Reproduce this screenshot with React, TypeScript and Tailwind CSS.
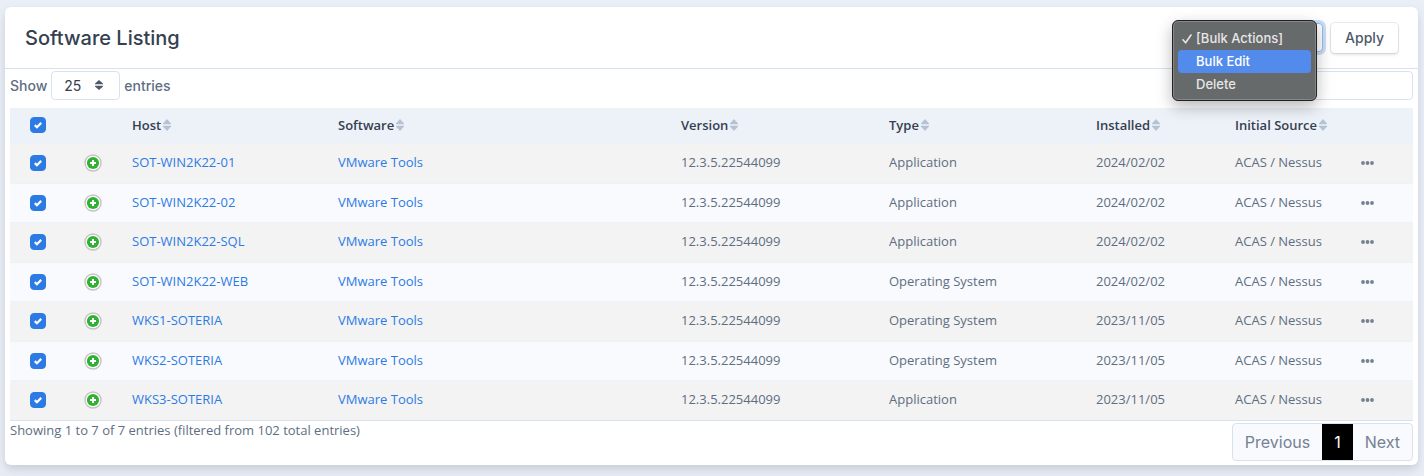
import { useState } from 'react';

type Software = {
  host: string;
  software: string;
  version: string;
  type: string;
  installed: string;
  source: string;
};

const columns = ['Host', 'Software', 'Version', 'Type', 'Installed', 'Initial Source'];

const rows: Software[] = [
  { host: 'SOT-WIN2K22-01', software: 'VMware Tools', version: '12.3.5.22544099', type: 'Application', installed: '2024/02/02', source: 'ACAS / Nessus' },
  { host: 'SOT-WIN2K22-02', software: 'VMware Tools', version: '12.3.5.22544099', type: 'Application', installed: '2024/02/02', source: 'ACAS / Nessus' },
  { host: 'SOT-WIN2K22-SQL', software: 'VMware Tools', version: '12.3.5.22544099', type: 'Application', installed: '2024/02/02', source: 'ACAS / Nessus' },
  { host: 'SOT-WIN2K22-WEB', software: 'VMware Tools', version: '12.3.5.22544099', type: 'Operating System', installed: '2024/02/02', source: 'ACAS / Nessus' },
  { host: 'WKS1-SOTERIA', software: 'VMware Tools', version: '12.3.5.22544099', type: 'Operating System', installed: '2023/11/05', source: 'ACAS / Nessus' },
  { host: 'WKS2-SOTERIA', software: 'VMware Tools', version: '12.3.5.22544099', type: 'Operating System', installed: '2023/11/05', source: 'ACAS / Nessus' },
  { host: 'WKS3-SOTERIA', software: 'VMware Tools', version: '12.3.5.22544099', type: 'Application', installed: '2023/11/05', source: 'ACAS / Nessus' },
];

function Checkbox({ label, checked, onChange }: { label: string; checked: boolean; onChange: () => void }) {
  return (
    <label className="relative mx-auto block h-4 w-4 cursor-pointer">
      <input
        type="checkbox"
        aria-label={label}
        checked={checked}
        onChange={onChange}
        className="peer block h-4 w-4 appearance-none rounded border border-[#b6c1d2] bg-white checked:border-[#2c7be5] checked:bg-[#2c7be5]"
      />
      <svg viewBox="0 0 16 16" fill="none" className="pointer-events-none absolute inset-0 hidden h-4 w-4 peer-checked:block">
        <path d="M4.8 8.1 6.9 10.2 11.2 5.9" stroke="#fff" strokeWidth="2.2" />
      </svg>
    </label>
  );
}

function SortIcon() {
  return (
    <svg viewBox="0 0 8 12" className="ml-[2px] h-3 w-2" fill="#b6c1d2">
      <path d="M4 0 8 4.6V5.2H0V4.6z" />
      <path d="M4 12 8 7.4V6.8H0V7.4z" />
    </svg>
  );
}

function ExpandIcon() {
  return (
    <svg viewBox="0 0 18 18" className="h-[18px] w-[18px]">
      <circle cx="9" cy="9" r="8" fill="#fff" stroke="#c4c4c4" strokeWidth="1.4" />
      <circle cx="9" cy="9" r="6.1" fill="#31b131" />
      <path d="M9 6v6M6 9h6" stroke="#fff" strokeWidth="2" />
    </svg>
  );
}

function BulkMenu() {
  return (
    <ul
      role="listbox"
      aria-label="Bulk actions"
      className="absolute -top-[3px] right-[6px] z-10 w-[145px] rounded-md border border-[#222] bg-[#676a6b] px-[5px] pt-[6px] pb-1 font-['Inter',sans-serif] text-[13px] leading-[23px] font-medium text-[#e6e6e6] shadow-[inset_0_0_0_1px_#858788,0_6px_16px_rgba(0,0,0,0.28)]"
    >
      <li role="option" aria-selected="true" className="flex items-center">
        <svg viewBox="0 0 10 10" fill="none" className="mr-1 ml-1 h-[10px] w-[10px]">
          <path d="M1 5.8 3.6 8.8 9 1" stroke="currentColor" strokeWidth="1.6" strokeLinecap="round" strokeLinejoin="round" />
        </svg>
        [Bulk Actions]
      </li>
      <li role="option" aria-selected="false" className="rounded bg-[#528bec] pl-[18px] text-white">Bulk Edit</li>
      <li role="option" aria-selected="false" className="pl-[18px]">Delete</li>
    </ul>
  );
}

export default function App() {
  const [selected, setSelected] = useState<string[]>(rows.map((row) => row.host));
  const allSelected = selected.length === rows.length;

  const toggle = (host: string) => {
    setSelected(selected.includes(host) ? selected.filter((h) => h !== host) : [...selected, host]);
  };

  return (
    <div className="min-h-screen bg-[#e9eef7] px-[5px] pt-[7px] pb-[11px] font-['Open_Sans',sans-serif] text-[13px] text-[#5e6e82]">
      <div className="mr-[1px] rounded-md bg-white shadow-[0_7px_14px_0_rgba(65,69,88,0.1),0_3px_6px_0_rgba(0,0,0,0.07)]">
        {/* Header */}
        <div className="flex h-[62px] items-center justify-between border-b border-[#d8e2ef] px-5">
          <h1 className="font-['Inter',sans-serif] text-xl font-medium text-[#344050]">Software Listing</h1>
          <div className="flex items-center gap-2">
            <div className="relative">
              <select
                aria-label="Bulk action"
                className="block h-[29px] w-36 appearance-none rounded border border-[#95bdf2] bg-white px-3 font-['Inter',sans-serif] text-sm text-[#344050] ring-3 ring-[#cadef9] outline-none"
              >
                <option>[Bulk Actions]</option>
                <option>Bulk Edit</option>
                <option>Delete</option>
              </select>
              <BulkMenu />
            </div>
            <button className="h-[30px] rounded bg-white px-[14px] font-['Inter',sans-serif] text-sm font-medium text-[#4d5969] shadow-[0_0_0_1px_rgba(43,45,80,0.1),0_2px_3px_rgba(43,45,80,0.12)]">
              Apply
            </button>
          </div>
        </div>

        <div className="px-[5px] pb-1">
          {/* Length and search */}
          <div className="flex items-start justify-between pt-[2px] pb-2">
            <label className="flex items-center gap-1 font-['Inter',sans-serif] text-sm font-medium">
              Show
              <span className="relative">
                <select
                  defaultValue="25"
                  className="block h-[29px] w-[69px] appearance-none rounded border border-[#d8e2ef] bg-white pl-3 text-sm font-normal text-[#344050]"
                >
                  <option>10</option>
                  <option>25</option>
                  <option>50</option>
                </select>
                <svg viewBox="0 0 8 10" className="pointer-events-none absolute top-[9px] right-[17px] h-[10px] w-2" fill="#4d5969">
                  <path d="M4 0 8 3.6V4.2H0V3.6zM4 10 8 6.4V5.8H0V6.4z" />
                </svg>
              </span>
              entries
            </label>
            <input
              type="search"
              aria-label="Search"
              className="h-[29px] w-[210px] rounded border border-[#d8e2ef] bg-white px-2"
            />
          </div>

          {/* Table */}
          <table className="w-full table-fixed border-b border-[#d8e2ef] text-left">
            <colgroup>
              <col className="w-14" />
              <col className="w-[54px]" />
              <col className="w-[206px]" />
              <col />
              <col className="w-[208px]" />
              <col className="w-[207px]" />
              <col className="w-[139px]" />
              <col className="w-[126px]" />
              <col className="w-16" />
            </colgroup>
            <thead>
              <tr className="h-[35px] bg-[#edf2f9] text-[#344050]">
                <th>
                  <Checkbox
                    label="Select all"
                    checked={allSelected}
                    onChange={() => setSelected(allSelected ? [] : rows.map((row) => row.host))}
                  />
                </th>
                <th></th>
                {columns.map((column) => (
                  <th key={column} className="pl-3 font-semibold">
                    <span className="flex items-center whitespace-nowrap">
                      {column}
                      <SortIcon />
                    </span>
                  </th>
                ))}
                <th></th>
              </tr>
            </thead>
            <tbody>
              {rows.map((row) => (
                <tr
                  key={row.host}
                  className="border-t border-[#edf2f9] odd:h-10 odd:bg-[#f3f3f3] even:h-[39px] even:bg-[#f9fafd]"
                >
                  <td>
                    <Checkbox
                      label={`Select ${row.host}`}
                      checked={selected.includes(row.host)}
                      onChange={() => toggle(row.host)}
                    />
                  </td>
                  <td>
                    <button aria-label="Show details" className="mx-auto block">
                      <ExpandIcon />
                    </button>
                  </td>
                  <td className="pl-3"><a href="#host" className="text-[#2c7be5]">{row.host}</a></td>
                  <td className="pl-3"><a href="#software" className="text-[#2c7be5]">{row.software}</a></td>
                  <td className="pl-3">{row.version}</td>
                  <td className="pl-3">{row.type}</td>
                  <td className="pl-3">{row.installed}</td>
                  <td className="pl-3">{row.source}</td>
                  <td className="pl-3">
                    <button aria-label="More actions" className="block">
                      <svg viewBox="0 0 13 4" className="h-1 w-[13px]" fill="#748194">
                        <circle cx="2" cy="2" r="1.9" />
                        <circle cx="6.5" cy="2" r="1.9" />
                        <circle cx="11" cy="2" r="1.9" />
                      </svg>
                    </button>
                  </td>
                </tr>
              ))}
            </tbody>
          </table>

          {/* Footer */}
          <div className="flex items-start justify-between">
            <p className="leading-[18px]">Showing 1 to 7 of 7 entries (filtered from 102 total entries)</p>
            <nav
              aria-label="Pagination"
              className="mt-[2px] flex h-[38px] overflow-hidden rounded border border-[#d8e2ef] bg-[#f9fafd] font-['Inter',sans-serif] text-base leading-9 text-[#748194]"
            >
              <a href="#previous" className="px-3">Previous</a>
              <a href="#1" aria-current="page" className="-my-px bg-black px-3 leading-[38px] text-white">1</a>
              <a href="#next" className="px-3">Next</a>
            </nav>
          </div>
        </div>
      </div>
    </div>
  );
}
